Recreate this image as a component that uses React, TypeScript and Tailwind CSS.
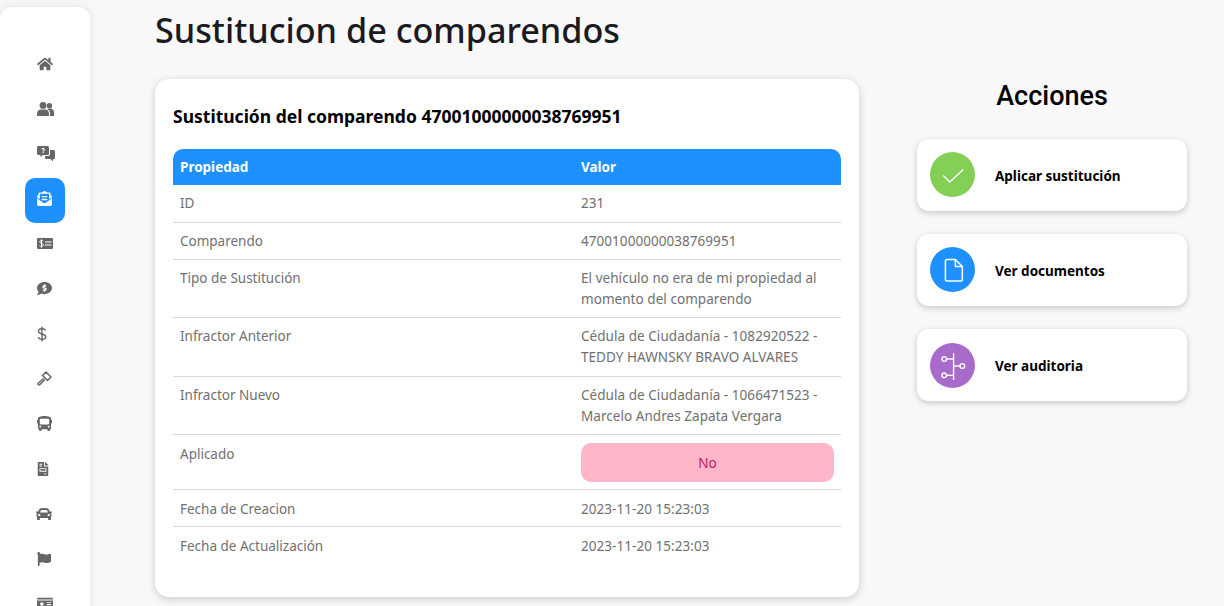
import { ReactNode } from "react";
import {
  FaBus,
  FaCar,
  FaCommentDollar,
  FaEnvelopeOpenText,
  FaFileInvoice,
  FaFlag,
  FaHome,
  FaIdCard,
} from "react-icons/fa";

const Friends = () => (
  <svg viewBox="0 0 17 14" className="w-[17px] h-[14px]" fill="currentColor">
    <circle cx="6" cy="3.400" r="3.400" />
    <path d="M0 14v-2.500C0 9 2 7.500 4 7.500h4c2 0 4 1.500 4 4V14z" />
    <circle cx="12.400" cy="3.800" r="2.700" />
    <path d="M10.400 7.300c.6-.5 1.300-.7 2-.7h.8C15.400 6.600 17 8.300 17 10.400V14h-4v-3c0-1.500-1-2.900-2.600-3.700z" />
  </svg>
);

const QuestionChat = () => (
  <svg viewBox="0 0 18 16" className="w-[18px] h-4" fill="currentColor">
    <path d="M1.5 0h9A1.5 1.5 0 0 1 12 1.5v6A1.5 1.5 0 0 1 10.5 9H6l-2.5 2V9h-2A1.5 1.5 0 0 1 0 7.500v-6A1.500 1.500 0 0 1 1.500 0z" />
    <path d="M13 4h3.500A1.500 1.500 0 0 1 18 5.500v6a1.500 1.500 0 0 1-1.500 1.500H16v2.500L13.500 13H9.500A1.500 1.500 0 0 1 8 11.500V10h3a2 2 0 0 0 2-2z" />
    <path d="M4.300 3.200C4.600 2.300 5.300 1.900 6.100 1.900c1 0 1.800.6 1.800 1.500 0 1.200-1.300 1.200-1.300 2.100H5.500c0-1.400 1.200-1.400 1.200-2.100 0-.3-.3-.5-.6-.5-.4 0-.6.200-.8.600zM5.500 6h1.100v1.100H5.500z" fill="#fff" />
  </svg>
);

const MoneyCheck = () => (
  <svg viewBox="0 0 16 11" className="w-4 h-[11px]">
    <rect width="16" height="11" rx="1" fill="currentColor" />
    <path d="M6.200 3.300C5.900 2.700 5.300 2.500 4.500 2.500c-1 0-1.700.4-1.700 1.400 0 1.900 3.500 1 3.500 3 0 1-.8 1.500-1.800 1.500-.8 0-1.500-.3-1.800-1M4.500 1.300v8.400" fill="none" stroke="#fff" strokeWidth="1" />
    <path d="M8 4h6.500M8 7h6.500" fill="none" stroke="#fff" strokeWidth="1.200" />
  </svg>
);

const ThinDollar = () => (
  <svg viewBox="0 0 10 16" className="w-[10px] h-4" fill="none" stroke="currentColor" strokeWidth="1.4">
    <path d="M8.500 4.600C8.200 3.200 6.900 2.700 5 2.700c-2.200 0-3.600 1-3.600 2.600 0 3.500 7.300 2 7.300 5.500 0 1.700-1.500 2.600-3.700 2.600-2 0-3.400-.7-3.700-2.200" />
    <path d="M5 .5v15" />
  </svg>
);

const OutlineGavel = () => (
  <svg viewBox="0 0 15 15" className="w-[15px] h-[15px]" fill="none" stroke="currentColor" strokeWidth="1.500" strokeLinejoin="round">
    <path d="M5.500 4.500L9 1l5 5-3.500 3.500z" />
    <path d="M6 8L1.200 12.300a.9.9 0 0 0 0 1.200l.3.300a.9.900 0 0 0 1.200 0L7.300 9.300z" />
  </svg>
);

const sideIcons: { icon: ReactNode; active?: boolean }[] = [
  { icon: <FaHome size={16} /> },
  { icon: <Friends /> },
  { icon: <QuestionChat /> },
  { icon: <FaEnvelopeOpenText size={15} />, active: true },
  { icon: <MoneyCheck /> },
  { icon: <FaCommentDollar size={15} /> },
  { icon: <ThinDollar /> },
  { icon: <OutlineGavel /> },
  { icon: <FaBus size={15} /> },
  { icon: <FaFileInvoice size={14} className="-ml-[1px]" /> },
  { icon: <FaCar size={16} className="-ml-[1px]" /> },
  { icon: <FaFlag size={14} /> },
  { icon: <FaIdCard size={16} /> },
];

const rows: { label: string; value: ReactNode; tall?: boolean; low?: boolean }[] = [
  { label: "ID", value: "231", tall: true },
  { label: "Comparendo", value: "47001000000038769951" },
  { label: "Tipo de Sustitución", value: "El vehículo no era de mi propiedad al momento del comparendo" },
  { label: "Infractor Anterior", value: "Cédula de Ciudadanía - 1082920522 - TEDDY HAWNSKY BRAVO ALVARES", tall: true },
  { label: "Infractor Nuevo", value: "Cédula de Ciudadanía - 1066471523 - Marcelo Andres Zapata Vergara" },
  {
    label: "Aplicado",
    low: true,
    value: (
      <div className="h-[39px] pt-[2px] rounded-[10px] bg-[#ffb6c8] text-[#c2185b] flex items-center justify-center">No</div>
    ),
  },
  { label: "Fecha de Creacion", value: "2023-11-20 15:23:03", low: true },
  { label: "Fecha de Actualización", value: "2023-11-20 15:23:03", low: true },
];

const actions = [
  {
    label: "Aplicar sustitución",
    bg: "bg-[#84cf55]",
    top: "mt-[13px]",
    icon: (
      <svg viewBox="0 0 24 24" className="w-[26px] h-[26px]" fill="none" stroke="#fff" strokeWidth="1.2">
        <path d="M3 12.500l6 6L21.500 7" />
      </svg>
    ),
  },
  {
    label: "Ver documentos",
    bg: "bg-[#1e90ff]",
    top: "mt-[13px]",
    icon: (
      <svg viewBox="0 0 24 24" className="w-7 h-7" fill="none" stroke="#fff" strokeWidth="1.300" strokeLinejoin="round">
        <path d="M7 3h7l6 6v11a1.500 1.500 0 0 1-1.500 1.500h-11.500A1.500 1.500 0 0 1 5.500 20V4.500A1.500 1.500 0 0 1 7 3z" />
        <path d="M14 3v6h6" />
      </svg>
    ),
  },
  {
    label: "Ver auditoria",
    bg: "bg-[#a86bcc]",
    top: "mt-[14px]",
    icon: (
      <svg viewBox="0 0 24 24" className="w-7 h-7" fill="none" stroke="#fff" strokeWidth="1.200">
        <path d="M12.500 1v23" />
        <circle cx="4.500" cy="6" r="2" />
        <path d="M6.500 6h6" />
        <circle cx="20" cy="12" r="2" />
        <path d="M12.500 12H18" />
        <circle cx="4.500" cy="20" r="2" />
        <path d="M6.500 20h6" />
      </svg>
    ),
  },
];

export default function App() {
  return (
    <div className="h-[606px] overflow-hidden bg-[#f8f8f8] flex font-['Noto_Sans','Open_Sans',sans-serif]">
      <aside className="w-[90px] shrink-0 mt-[7px] h-[640px] bg-white rounded-[12px] shadow-[0_0_10px_rgba(0,0,0,0.1)] pt-[36px] flex flex-col items-start">
        {sideIcons.map((item, i) => (
          <div
            key={i}
            className={`w-10 h-[45px] ml-[25px] pl-[12px] pb-1 rounded-[10px] flex items-center shrink-0 ${
              item.active ? "bg-[#1e90ff] text-white" : "text-[#666666]"
            }`}
          >
            {item.icon}
          </div>
        ))}
      </aside>

      <main className="ml-[65px] w-[704px] shrink-0">
        <h1 className="h-[79px] pt-[5px] text-[34.2px] leading-[50px] font-medium text-[#1a1a1f]">
          Sustitucion de comparendos
        </h1>
        <section className="h-[518px] bg-white rounded-[14px] shadow-[0_2px_8px_rgba(0,0,0,0.18)] px-[18px] pt-[24px]">
          <h2 className="h-[46px] text-[17.5px] leading-[27px] font-bold text-black">
            Sustitución del comparendo 47001000000038769951
          </h2>
          <table className="w-full table-fixed border-separate border-spacing-0 text-[13.5px] leading-[21px] text-[#707070]">
            <thead>
              <tr className="text-white font-bold">
                <th className="w-[401px] h-9 px-[7px] text-left bg-[#1e90ff] rounded-tl-[10px]">Propiedad</th>
                <th className="h-9 px-[7px] text-left bg-[#1e90ff] rounded-tr-[10px]">Valor</th>
              </tr>
            </thead>
            <tbody>
              {rows.map((row, i) => {
                const border = i < rows.length - 1 ? "border-b border-[#d8d8d8]" : "";
                const pad = row.low ? "pt-[9px] pb-[6px]" : row.tall ? "pt-2 pb-2" : "pt-2 pb-[7px]";
                const valuePad = row.label === "Aplicado" ? "pt-2 pb-[7px]" : pad;
                return (
                  <tr key={row.label}>
                    <td className={`px-[7px] align-top ${pad} ${border}`}>{row.label}</td>
                    <td className={`px-[7px] align-top tracking-[0.05px] ${valuePad} ${border}`}>{row.value}</td>
                  </tr>
                );
              })}
            </tbody>
          </table>
        </section>
      </main>

      <div className="ml-[58px] w-[270px] shrink-0">
        <h2 className="h-[139px] pt-[77px] text-center text-[27px] leading-[38px] font-medium text-black font-['Roboto',sans-serif]">
          Acciones
        </h2>
        <div className="flex flex-col gap-[23px]">
          {actions.map((action) => (
            <div
              key={action.label}
              className="h-[72px] bg-white rounded-[12px] shadow-[0_2px_6px_rgba(0,0,0,0.2)] flex items-start pl-[13px]"
            >
              <div className={`w-[45px] h-[45px] rounded-full flex items-center justify-center ${action.top} ${action.bg}`}>
                {action.icon}
              </div>
              <span className="ml-5 mt-[27px] text-[13.5px] leading-5 font-bold text-black">{action.label}</span>
            </div>
          ))}
        </div>
      </div>
    </div>
  );
}
